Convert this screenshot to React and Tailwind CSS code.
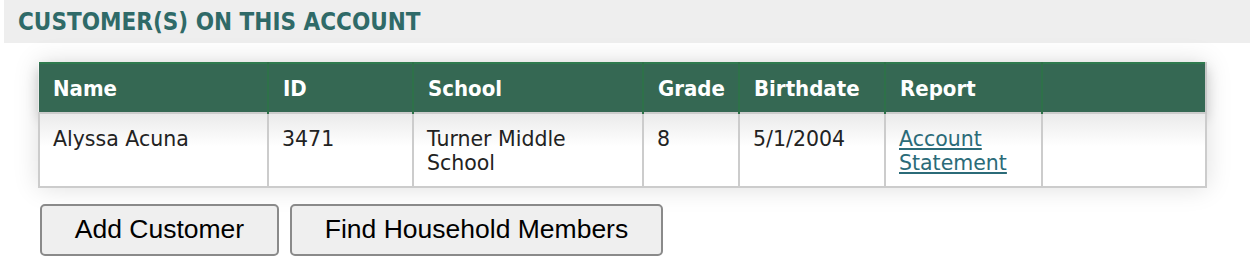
import React from "react";

const columns = [
    { label: "Name", w: "w-[229px]" },
    { label: "ID", w: "w-[145px]" },
    { label: "School", w: "w-[230px]" },
    { label: "Grade", w: "w-[96px]" },
    { label: "Birthdate", w: "w-[146px]" },
    { label: "Report", w: "w-[157px]" },
    { label: "", w: "" },
];

const customers = [
    { name: "Alyssa Acuna", id: "3471", school: "Turner Middle School", grade: "8", birthdate: "5/1/2004" },
];

const App = () => {
    return (
        <div className="w-[1254px] h-[278px] bg-white font-['DejaVu_Sans',sans-serif]">
            <div className="ml-[4px] mr-[4px] h-[43px] bg-[#eeeeee] pl-[14px] pt-[7px]">
                <h2 className="font-['DejaVu_Sans_Condensed',sans-serif] text-[24px] leading-[30px] font-bold text-[#2f6a68]">
                    CUSTOMER(S) ON THIS ACCOUNT
                </h2>
            </div>

            <div className="pl-[38px] pt-[19px]">
                <table className="w-[1169px] table-fixed border-collapse shadow-[0_0_24px_rgba(0,0,0,0.13)]">
                    <thead>
                        <tr className="h-[50px] bg-[#356853] shadow-[0_6px_12px_rgba(0,0,0,0.18)]">
                            {columns.map((col, i) => (
                                <th
                                    key={i}
                                    className={`${col.w} border-t-2 border-t-[#2f7a4e] border-r-2 border-r-[#2e7149] last:border-r-[#c8c8c8] px-[14px] text-left font-['DejaVu_Sans_Condensed',sans-serif] text-[22px] font-bold text-white`}
                                >
                                    {col.label}
                                </th>
                            ))}
                        </tr>
                    </thead>
                    <tbody>
                        {customers.map((c, i) => (
                            <tr key={i} className="h-[74px] align-top text-[20.5px] leading-[24px] text-[#222222] bg-gradient-to-b from-[#eaeaea] to-white to-[45%]">
                                <td className="border-2 border-[#cccccc] px-[13px] pt-[13px]">{c.name}</td>
                                <td className="border-2 border-[#cccccc] px-[13px] pt-[13px]">{c.id}</td>
                                <td className="border-2 border-[#cccccc] px-[13px] pt-[13px]">{c.school}</td>
                                <td className="border-2 border-[#cccccc] px-[13px] pt-[13px]">{c.grade}</td>
                                <td className="border-2 border-[#cccccc] px-[13px] pt-[13px]">{c.birthdate}</td>
                                <td className="border-2 border-[#cccccc] px-[13px] pt-[13px]">
                                    <a href="#" className="text-[#2b6b78] underline">Account Statement</a>
                                </td>
                                <td className="border-2 border-[#cccccc]"></td>
                            </tr>
                        ))}
                    </tbody>
                </table>
            </div>

            <div className="flex gap-[11px] pl-[40px] pt-[16px] font-['Liberation_Sans',Arial,sans-serif]">
                <button className="w-[239px] h-[52px] rounded-[5px] border-2 border-[#8a8a8a] bg-[#efefef] text-[26.5px] text-black">
                    Add Customer
                </button>
                <button className="w-[373px] h-[52px] rounded-[5px] border-2 border-[#8a8a8a] bg-[#efefef] text-[26.5px] text-black">
                    Find Household Members
                </button>
            </div>
        </div>
    );
};

export default App;
